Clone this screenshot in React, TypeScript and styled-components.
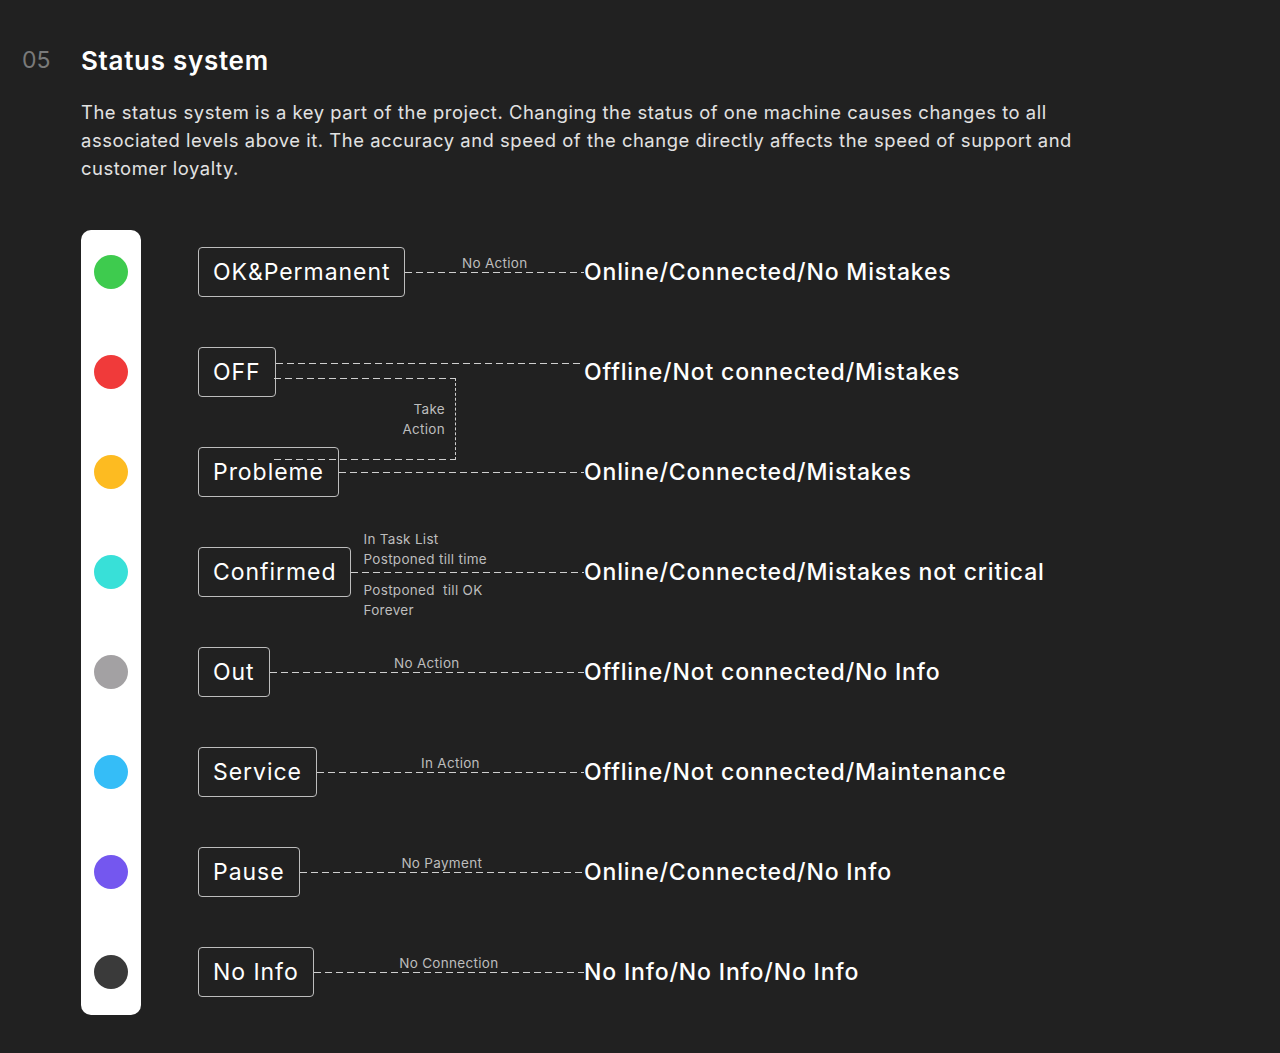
import styled, { createGlobalStyle } from 'styled-components';

const Global = createGlobalStyle`
  body {
    margin: 0;
    background: #212121;
    font-family: Inter, "Noto Sans", sans-serif;
    color: #fff;
  }
`;

const Page = styled.div`
  width: 1280px;
  height: 1053px;
  padding: 44px 0 0 22px;
  box-sizing: border-box;
`;

const Header = styled.div`
  display: flex;
  align-items: center;
  gap: 28px;
  height: 32px;
`;

const Num = styled.span`
  font-size: 23px;
  color: #7a7a7a;
  width: 31px;
`;

const Title = styled.h1`
  margin: 0;
  font-size: 26px;
  font-weight: 600;
  letter-spacing: 0.7px;
`;

const Text = styled.p`
  margin: 22px 0 0 59px;
  width: 1010px;
  font-size: 18.4px;
  line-height: 28px;
  color: #e2e2e2;
  letter-spacing: 0.55px;
`;

const Diagram = styled.div`
  display: flex;
  margin: 40px 0 0 59px;
  gap: 57px;
`;

const Pill = styled.div`
  width: 60px;
  height: 785px;
  margin-top: 8px;
  background: #fff;
  border-radius: 10px;
  display: flex;
  flex-direction: column;
  align-items: center;
  padding-top: 25px;
  gap: 66px;
  box-sizing: border-box;
`;

const Dot = styled.div<{ $c: string }>`
  width: 34px;
  height: 34px;
  border-radius: 50%;
  background: ${(p) => p.$c};
`;

const Rows = styled.div`
  position: relative;
  display: flex;
  flex-direction: column;
`;

const Row = styled.div`
  height: 100px;
  display: flex;
  align-items: center;
`;

const Left = styled.div`
  width: 386px;
  display: flex;
  align-items: center;
`;

const Box = styled.div`
  height: 48px;
  padding: 0 14px;
  border: 1px solid #bdbdbd;
  border-radius: 4px;
  display: flex;
  align-items: center;
  font-size: 23px;
  letter-spacing: 0.95px;
`;

const dash = `
  background-image: linear-gradient(to right, #cfcfcf 60%, transparent 0);
  background-size: 11px 1px;
  background-repeat: repeat-x;
`;

const Line = styled.div<{ $dy?: number }>`
  position: relative;
  flex: 1;
  height: 1px;
  ${dash}
  transform: translateY(${(p) => p.$dy ?? 0}px);
`;

const LineLabel = styled.span`
  position: absolute;
  left: 50%;
  bottom: 2px;
  transform: translateX(-50%);
  font-size: 13.5px;
  letter-spacing: 0.3px;
  color: #bdbdbd;
  white-space: nowrap;
`;

const SideNotes = styled.div<{ $top: boolean }>`
  position: absolute;
  left: 12px;
  ${(p) => (p.$top ? 'bottom: 4px;' : 'top: 8px;')}
  font-size: 13.5px;
  letter-spacing: 0.3px;
  line-height: 20px;
  color: #bdbdbd;
  white-space: nowrap;
`;

const Result = styled.span`
  font-size: 23px;
  font-weight: 500;
  letter-spacing: 0.85px;
`;

const Bracket = styled.div`
  position: absolute;
  left: 76px;
  top: 156px;
  width: 182px;
  height: 82px;
  border-right: 1px dashed #cfcfcf;
  ${dash}
  background-image: linear-gradient(to right, #cfcfcf 60%, transparent 0),
    linear-gradient(to right, #cfcfcf 60%, transparent 0);
  background-position: top left, bottom left;
  display: flex;
  justify-content: flex-end;
  align-items: center;
  padding-right: 10px;
  box-sizing: border-box;
`;

const BracketLabel = styled.span`
  font-size: 13.5px;
  letter-spacing: 0.3px;
  line-height: 20px;
  color: #bdbdbd;
  text-align: right;
`;

const colors = ['#3ecb4e', '#f03a3a', '#fdbb21', '#38e0d8', '#a3a1a3', '#35bdf7', '#7457ef', '#3a3a3a'];

type R = { name: string; label?: string; result: string; dy?: number; notes?: boolean };

const rows: R[] = [
  { name: 'OK&Permanent', label: 'No Action', result: 'Online/Connected/No Mistakes' },
  { name: 'OFF', result: 'Offline/Not connected/Mistakes', dy: -9 },
  { name: 'Probleme', result: 'Online/Connected/Mistakes' },
  { name: 'Confirmed', result: 'Online/Connected/Mistakes not critical', notes: true },
  { name: 'Out', label: 'No Action', result: 'Offline/Not connected/No Info' },
  { name: 'Service', label: 'In Action', result: 'Offline/Not connected/Maintenance' },
  { name: 'Pause', label: 'No Payment', result: 'Online/Connected/No Info' },
  { name: 'No Info', label: 'No Connection', result: 'No Info/No Info/No Info' },
];

export default function App() {
  return (
    <Page>
      <Global />
      <Header>
        <Num>05</Num>
        <Title>Status system</Title>
      </Header>
      <Text>
        The status system is a key part of the project. Changing the status of one machine causes changes to all
        associated levels above it. The accuracy and speed of the change directly affects the speed of support and
        customer loyalty.
      </Text>
      <Diagram>
        <Pill>
          {colors.map((c) => (
            <Dot key={c} $c={c} />
          ))}
        </Pill>
        <Rows>
          {rows.map((r) => (
            <Row key={r.name}>
              <Left>
                <Box>{r.name}</Box>
                <Line $dy={r.dy}>
                  {r.label && <LineLabel>{r.label}</LineLabel>}
                  {r.notes && (
                    <>
                      <SideNotes $top>
                        In Task List
                        <br />
                        Postponed till time
                      </SideNotes>
                      <SideNotes $top={false}>
                        Postponed&nbsp; till OK
                        <br />
                        Forever
                      </SideNotes>
                    </>
                  )}
                </Line>
              </Left>
              <Result>{r.result}</Result>
            </Row>
          ))}
          <Bracket>
            <BracketLabel>
              Take
              <br />
              Action
            </BracketLabel>
          </Bracket>
        </Rows>
      </Diagram>
    </Page>
  );
}
